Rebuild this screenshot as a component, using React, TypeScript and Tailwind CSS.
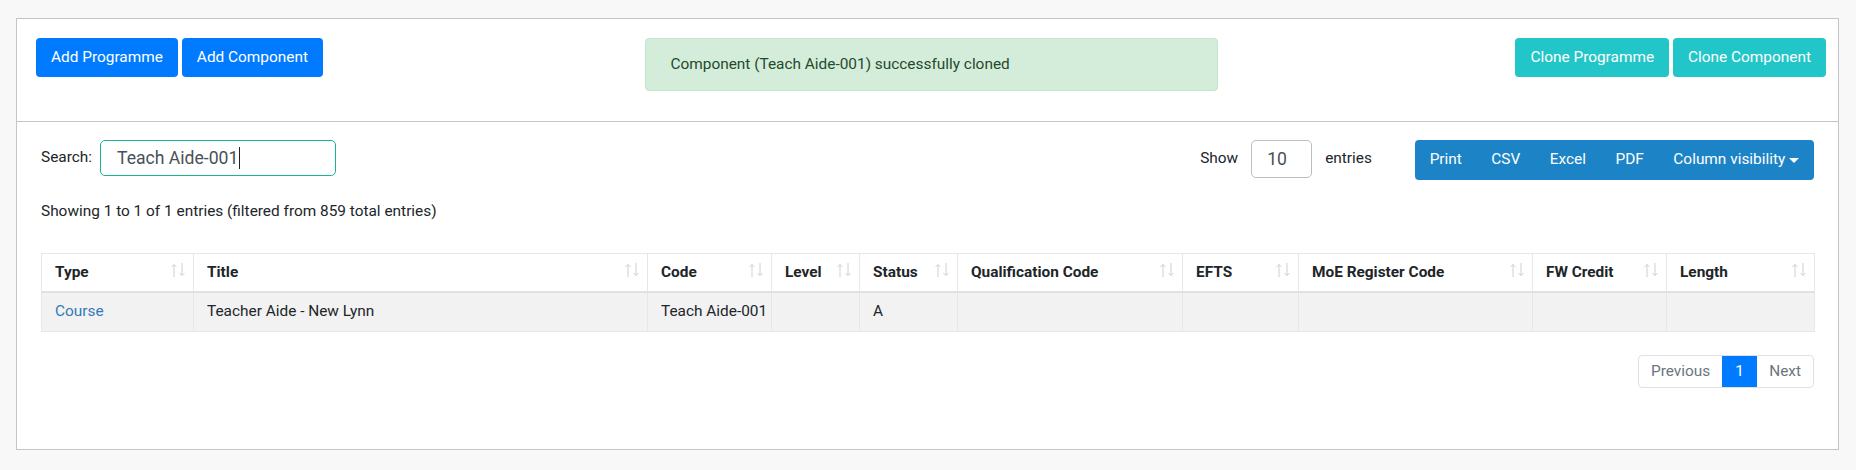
const columns = [
  { name: 'Type', w: 'w-[152px]' },
  { name: 'Title', w: 'w-[454px]' },
  { name: 'Code', w: 'w-[124px]' },
  { name: 'Level', w: 'w-[88px]' },
  { name: 'Status', w: 'w-[98px]' },
  { name: 'Qualification Code', w: 'w-[225px]' },
  { name: 'EFTS', w: 'w-[116px]' },
  { name: 'MoE Register Code', w: 'w-[234px]' },
  { name: 'FW Credit', w: 'w-[134px]' },
  { name: 'Length', w: 'w-[148px]' },
];

const row = ['Course', 'Teacher Aide - New Lynn', 'Teach Aide-001', '', 'A', '', '', '', '', ''];

const SortIcon = () => (
  <span className="absolute right-[8px] top-[9px] flex gap-[2px]">
    <svg width="6" height="14" viewBox="0 0 6 14" fill="none" stroke="#cfcfcf" strokeWidth="1">
      <path d="M3 1.5V14M0.5 4L3 1.5L5.5 4" />
    </svg>
    <svg width="6" height="14" viewBox="0 0 6 14" fill="none" stroke="#cfcfcf" strokeWidth="1">
      <path d="M3 0V12.5M0.5 10L3 12.5L5.5 10" />
    </svg>
  </span>
);

const App = () => {
  return (
    <div className="min-h-[470px] bg-[#f8f8f8] pt-[18px] px-[16px] font-['Roboto',sans-serif] text-[15.4px] text-[#212529]">
      <div className="w-[1823px] h-[432px] bg-white border border-[#c4c4cc]">
        {/* Header actions */}
        <div className="h-[103px] pt-[19px] pl-[19px] pr-[12px] border-b border-[#c4c4cc] grid grid-cols-[1fr_573px_1fr] items-start">
          <div className="flex gap-[4px]">
            <button className="h-[39px] px-[15px] rounded-[4px] bg-[#007bff] text-white">Add Programme</button>
            <button className="h-[39px] px-[15px] rounded-[4px] bg-[#007bff] text-white">Add Component</button>
          </div>
          <div className="h-[53px] flex items-center px-[25px] rounded-[4px] bg-[#d4edda] border border-[#c3e6cb] text-[#24492c]">
            Component (Teach Aide-001) successfully cloned
          </div>
          <div className="flex justify-end gap-[4px]">
            <button className="h-[39px] px-[15px] rounded-[4px] bg-[#23c6c8] text-white">Clone Programme</button>
            <button className="h-[39px] px-[15px] rounded-[4px] bg-[#23c6c8] text-white">Clone Component</button>
          </div>
        </div>

        {/* Table body */}
        <div className="px-[24px] pt-[18px]">
          <div className="flex items-start justify-between h-[40px]">
            <div className="flex items-center gap-[8px] h-[36px]">
              <span>Search:</span>
              <div className="w-[236px] h-[36px] border border-[#1ab394] rounded-[5px] flex items-center pl-[16px] text-[17.6px] text-[#495057]">
                Teach Aide-001
                <span className="w-px h-[22px] bg-[#222] ml-[1px]" />
              </div>
            </div>
            <div className="flex items-start">
              <div className="flex items-center gap-[13px] h-[38px]">
                <span>Show</span>
                <div className="w-[61px] h-[38px] border border-[#bdbdbd] rounded-[5px] flex items-center pl-[15px] text-[17.6px] text-[#495057]">10</div>
                <span>entries</span>
              </div>
              <div className="ml-[43px] flex h-[40px] rounded-[4px] bg-[#1c84c6] text-white">
                <button className="px-[14.75px]">Print</button>
                <button className="px-[14.75px]">CSV</button>
                <button className="px-[14.75px]">Excel</button>
                <button className="px-[14.75px]">PDF</button>
                <button className="px-[14.75px] flex items-center gap-[4px]">
                  Column visibility
                  <span className="inline-block w-0 h-0 border-l-[5px] border-r-[5px] border-t-[5px] border-l-transparent border-r-transparent border-t-white" />
                </button>
              </div>
            </div>
          </div>

          <div className="mt-[20px] leading-[23px]">Showing 1 to 1 of 1 entries (filtered from 859 total entries)</div>

          <table className="mt-[30px] w-[1773px] table-fixed border-collapse">
            <thead>
              <tr>
                {columns.map((c) => (
                  <th
                    key={c.name}
                    className={`${c.w} relative h-[38px] px-[13px] text-left font-bold whitespace-nowrap border border-[#e7e7e7] border-b-2 border-b-[#dee2e6]`}
                  >
                    {c.name}
                    <SortIcon />
                  </th>
                ))}
              </tr>
            </thead>
            <tbody>
              <tr className="bg-[#f2f2f2]">
                {row.map((v, i) => (
                  <td key={i} className="h-[40px] pl-[13px] pr-[4px] whitespace-nowrap border border-[#e7e7e7]">
                    {i === 0 ? <a href="#" className="text-[#337ab7]">{v}</a> : v}
                  </td>
                ))}
              </tr>
            </tbody>
          </table>

          <div className="mt-[23px] flex justify-end">
            <div className="flex h-[33px] border border-[#dee2e6] rounded-[4px] overflow-hidden text-[#6c757d]">
              <span className="px-[12px] flex items-center">Previous</span>
              <span className="w-[35px] flex items-center justify-center bg-[#007bff] text-white">1</span>
              <span className="px-[12px] flex items-center">Next</span>
            </div>
          </div>
        </div>
      </div>
    </div>
  );
};

export default App;
